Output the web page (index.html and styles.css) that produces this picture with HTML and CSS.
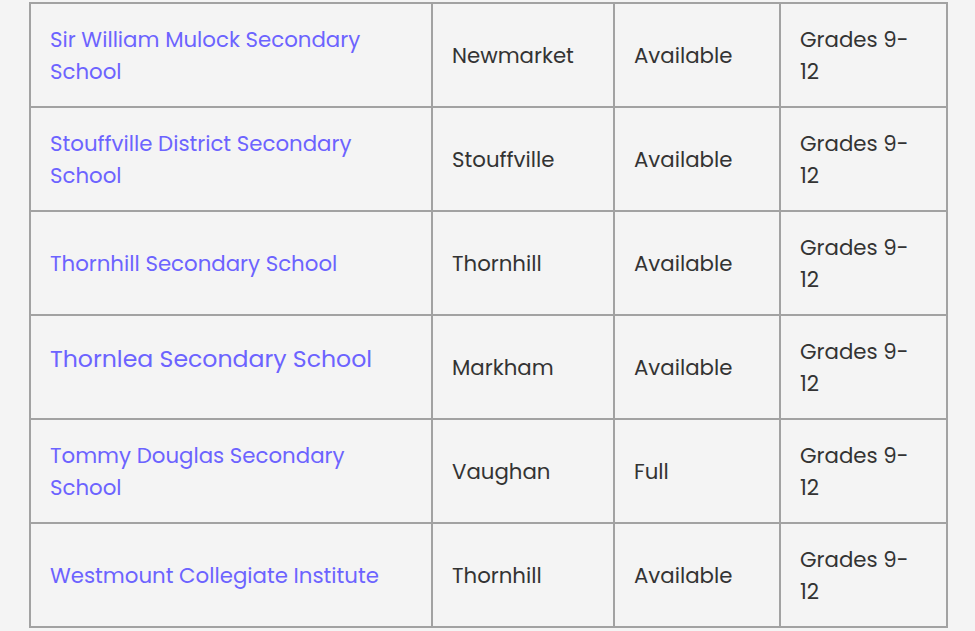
FILE: index.html
```html
<!DOCTYPE html>
<html lang="en">
<head>
<meta charset="utf-8">
<title>Schools</title>
<link rel="stylesheet" href="styles.css">
</head>
<body>
<table class="schools">
  <colgroup>
    <col class="c-name">
    <col class="c-city">
    <col class="c-status">
    <col class="c-grades">
  </colgroup>
  <tbody>
    <tr>
      <td><a href="#">Sir William Mulock Secondary School</a></td>
      <td>Newmarket</td>
      <td>Available</td>
      <td>Grades 9-12</td>
    </tr>
    <tr>
      <td><a href="#">Stouffville District Secondary School</a></td>
      <td>Stouffville</td>
      <td>Available</td>
      <td>Grades 9-12</td>
    </tr>
    <tr>
      <td><a href="#">Thornhill Secondary School</a></td>
      <td>Thornhill</td>
      <td>Available</td>
      <td>Grades 9-12</td>
    </tr>
    <tr>
      <td><p class="big"><a href="#">Thornlea Secondary School</a></p></td>
      <td>Markham</td>
      <td>Available</td>
      <td>Grades 9-12</td>
    </tr>
    <tr>
      <td><a href="#">Tommy Douglas Secondary School</a></td>
      <td>Vaughan</td>
      <td>Full</td>
      <td>Grades 9-12</td>
    </tr>
    <tr>
      <td><a href="#">Westmount Collegiate Institute</a></td>
      <td>Thornhill</td>
      <td>Available</td>
      <td>Grades 9-12</td>
    </tr>
  </tbody>
</table>
</body>
</html>
```
FILE: styles.css
```css
html, body {
  margin: 0;
  padding: 0;
  background: #f4f4f4;
}

body {
  font-family: "Poppins", "DejaVu Sans", sans-serif;
  font-size: 21.3px;
  line-height: 32px;
  color: #333333;
  padding: 2px 0 0 29px;
}

.schools {
  border-collapse: collapse;
  table-layout: fixed;
  width: 919px;
}

.c-name { width: 402px; }
.c-city { width: 182px; }
.c-status { width: 166px; }
.c-grades { width: 167px; }

.schools td {
  border: 2px solid #a2a2a2;
  padding: 20px 26px 18px 19px;
  vertical-align: middle;
  height: 64px;
}

.schools a {
  color: #6c63ff;
  text-decoration: none;
}

.big {
  margin: 0 0 18px;
  font-size: 23.6px;
  line-height: 32px;
}
```
